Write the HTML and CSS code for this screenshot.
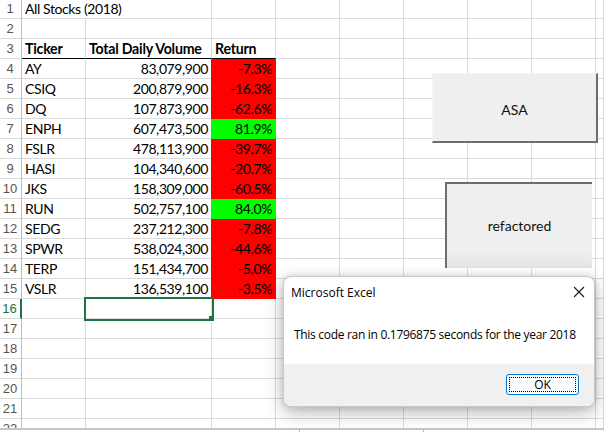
FILE: index.html
```html
<!DOCTYPE html>
<html>
<head>
<meta charset="utf-8">
<link rel="stylesheet" href="styles.css">
</head>
<body>
<div class="app">
  <div class="sheet">
    <div class="row r1"><div class="rh">1</div><div class="c wab">All Stocks (2018)</div><div class="c cc"></div><div class="c cd"></div><div class="c cd"></div><div class="c cd"></div><div class="c cd"></div><div class="c cd"></div><div class="c ci"></div></div>
    <div class="row"><div class="rh">2</div><div class="c ca"></div><div class="c cb"></div><div class="c cc"></div><div class="c cd"></div><div class="c cd"></div><div class="c cd"></div><div class="c cd"></div><div class="c cd"></div><div class="c ci"></div></div>
    <div class="row"><div class="rh">3</div><div class="c ca hd">Ticker</div><div class="c cb hd">Total Daily Volume</div><div class="c cc hd">Return</div><div class="c cd"></div><div class="c cd"></div><div class="c cd"></div><div class="c cd"></div><div class="c cd"></div><div class="c ci"></div></div>
    <div class="row"><div class="rh">4</div><div class="c ca">AY</div><div class="c cb num">83,079,900</div><div class="c cc num neg">-7.3%</div><div class="c cd"></div><div class="c cd"></div><div class="c cd"></div><div class="c cd"></div><div class="c cd"></div><div class="c ci"></div></div>
    <div class="row"><div class="rh">5</div><div class="c ca">CSIQ</div><div class="c cb num">200,879,900</div><div class="c cc num neg">-16.3%</div><div class="c cd"></div><div class="c cd"></div><div class="c cd"></div><div class="c cd"></div><div class="c cd"></div><div class="c ci"></div></div>
    <div class="row"><div class="rh">6</div><div class="c ca">DQ</div><div class="c cb num">107,873,900</div><div class="c cc num neg">-62.6%</div><div class="c cd"></div><div class="c cd"></div><div class="c cd"></div><div class="c cd"></div><div class="c cd"></div><div class="c ci"></div></div>
    <div class="row"><div class="rh">7</div><div class="c ca">ENPH</div><div class="c cb num">607,473,500</div><div class="c cc num pos">81.9%</div><div class="c cd"></div><div class="c cd"></div><div class="c cd"></div><div class="c cd"></div><div class="c cd"></div><div class="c ci"></div></div>
    <div class="row"><div class="rh">8</div><div class="c ca">FSLR</div><div class="c cb num">478,113,900</div><div class="c cc num neg">-39.7%</div><div class="c cd"></div><div class="c cd"></div><div class="c cd"></div><div class="c cd"></div><div class="c cd"></div><div class="c ci"></div></div>
    <div class="row"><div class="rh">9</div><div class="c ca">HASI</div><div class="c cb num">104,340,600</div><div class="c cc num neg">-20.7%</div><div class="c cd"></div><div class="c cd"></div><div class="c cd"></div><div class="c cd"></div><div class="c cd"></div><div class="c ci"></div></div>
    <div class="row"><div class="rh">10</div><div class="c ca">JKS</div><div class="c cb num">158,309,000</div><div class="c cc num neg">-60.5%</div><div class="c cd"></div><div class="c cd"></div><div class="c cd"></div><div class="c cd"></div><div class="c cd"></div><div class="c ci"></div></div>
    <div class="row"><div class="rh">11</div><div class="c ca">RUN</div><div class="c cb num">502,757,100</div><div class="c cc num pos">84.0%</div><div class="c cd"></div><div class="c cd"></div><div class="c cd"></div><div class="c cd"></div><div class="c cd"></div><div class="c ci"></div></div>
    <div class="row"><div class="rh">12</div><div class="c ca">SEDG</div><div class="c cb num">237,212,300</div><div class="c cc num neg">-7.8%</div><div class="c cd"></div><div class="c cd"></div><div class="c cd"></div><div class="c cd"></div><div class="c cd"></div><div class="c ci"></div></div>
    <div class="row"><div class="rh">13</div><div class="c ca">SPWR</div><div class="c cb num">538,024,300</div><div class="c cc num neg">-44.6%</div><div class="c cd"></div><div class="c cd"></div><div class="c cd"></div><div class="c cd"></div><div class="c cd"></div><div class="c ci"></div></div>
    <div class="row"><div class="rh">14</div><div class="c ca">TERP</div><div class="c cb num">151,434,700</div><div class="c cc num neg">-5.0%</div><div class="c cd"></div><div class="c cd"></div><div class="c cd"></div><div class="c cd"></div><div class="c cd"></div><div class="c ci"></div></div>
    <div class="row"><div class="rh">15</div><div class="c ca">VSLR</div><div class="c cb num">136,539,100</div><div class="c cc num neg">-3.5%</div><div class="c cd"></div><div class="c cd"></div><div class="c cd"></div><div class="c cd"></div><div class="c cd"></div><div class="c ci"></div></div>
    <div class="row"><div class="rh sel-rh">16</div><div class="c ca"></div><div class="c cb sel"><span class="handle"></span></div><div class="c cc"></div><div class="c cd"></div><div class="c cd"></div><div class="c cd"></div><div class="c cd"></div><div class="c cd"></div><div class="c ci"></div></div>
    <div class="row"><div class="rh">17</div><div class="c ca"></div><div class="c cb"></div><div class="c cc"></div><div class="c cd"></div><div class="c cd"></div><div class="c cd"></div><div class="c cd"></div><div class="c cd"></div><div class="c ci"></div></div>
    <div class="row"><div class="rh">18</div><div class="c ca"></div><div class="c cb"></div><div class="c cc"></div><div class="c cd"></div><div class="c cd"></div><div class="c cd"></div><div class="c cd"></div><div class="c cd"></div><div class="c ci"></div></div>
    <div class="row"><div class="rh">19</div><div class="c ca"></div><div class="c cb"></div><div class="c cc"></div><div class="c cd"></div><div class="c cd"></div><div class="c cd"></div><div class="c cd"></div><div class="c cd"></div><div class="c ci"></div></div>
    <div class="row"><div class="rh">20</div><div class="c ca"></div><div class="c cb"></div><div class="c cc"></div><div class="c cd"></div><div class="c cd"></div><div class="c cd"></div><div class="c cd"></div><div class="c cd"></div><div class="c ci"></div></div>
    <div class="row"><div class="rh">21</div><div class="c ca"></div><div class="c cb"></div><div class="c cc"></div><div class="c cd"></div><div class="c cd"></div><div class="c cd"></div><div class="c cd"></div><div class="c cd"></div><div class="c ci"></div></div>
    <div class="row"><div class="rh">22</div><div class="c ca"></div><div class="c cb"></div><div class="c cc"></div><div class="c cd"></div><div class="c cd"></div><div class="c cd"></div><div class="c cd"></div><div class="c cd"></div><div class="c ci"></div></div>
  </div>
  <div class="tabbar">
    <div class="tab-left"></div>
    <div class="tab-gap"></div>
    <div class="tab-right"></div>
  </div>

  <div class="shape-btn asa">ASA</div>
  <div class="shape-btn refac">refactored</div>

  <div class="dialog">
    <div class="dlg-title">
      <span>Microsoft Excel</span>
      <svg class="close" width="12" height="12" viewBox="0 0 12 12"><path d="M1 1 L11 11 M11 1 L1 11" stroke="#1a1a1a" stroke-width="1.1" fill="none"/></svg>
    </div>
    <div class="dlg-body">This code ran in 0.1796875 seconds for the year 2018</div>
    <div class="dlg-foot">
      <div class="ok"><span class="ok-inner">OK</span></div>
    </div>
  </div>
</div>
</body>
</html>
```

FILE: styles.css
```css
html, body {
  margin: 0;
  padding: 0;
  background: #ffffff;
}
.app {
  position: relative;
  width: 604px;
  height: 432px;
  overflow: hidden;
  font-family: "Lato", "Liberation Sans", sans-serif;
}
.sheet {
  height: 428px;
  overflow: hidden;
  display: flex;
  flex-direction: column;
  border-bottom: 2px solid #c6c6c6;
}
.row {
  display: flex;
  flex: none;
  height: 20px;
}
.row.r1 {
  height: 19px;
}
.rh, .c {
  box-sizing: border-box;
  height: 100%;
  flex: none;
  border-bottom: 1px solid #dadada;
  border-right: 1px solid #dadada;
  font-size: 14px;
  letter-spacing: -0.4px;
  line-height: 19px;
  white-space: nowrap;
  overflow: hidden;
  color: #000;
}
.rh {
  width: 22px;
  text-align: center;
  color: #555;
  font-family: "Liberation Sans", sans-serif;
  font-size: 13px;
  letter-spacing: 0;
  border-right: 1px solid #bcbcbc;
  padding-right: 1px;
}
.r1 .rh, .r1 .c { line-height: 18px; }
.c { padding: 0 3px; }
.wab { width: 190px; }
.ca { width: 64px; }
.cb { width: 126px; }
.cc { width: 64px; }
.cd { width: 64px; }
.ci { flex: 1; }
.hd {
  font-weight: 700;
  font-size: 14.2px;
  letter-spacing: -0.25px;
  border-bottom: 1px solid #000;
}
.num { text-align: right; }
.neg {
  background: #ff0000;
  border-right-color: #ff0000;
  border-bottom-color: #ff0000;
  box-shadow: -1px 0 0 #ff0000;
}
.pos {
  background: #00ff00;
  border-right-color: #00ff00;
  border-bottom-color: #00ff00;
  box-shadow: -1px 0 0 #00ff00;
}
.sel {
  position: relative;
  overflow: visible;
  outline: 2px solid #217346;
  outline-offset: 0px;
  z-index: 1;
}
.handle {
  position: absolute;
  right: -4px;
  bottom: -4px;
  width: 5px;
  height: 5px;
  background: #217346;
  border: 1px solid #fff;
  border-top: none;
  border-left: none;
}
.sel-rh {
  color: #217346;
  border-right: 2px solid #217346;
}

.tabbar {
  display: flex;
  height: 2px;
}
.tab-left {
  width: 299px;
  border-right: 1px solid #b0b0b0;
}
.tab-gap { width: 123px; }
.tab-right {
  flex: 1;
  border-left: 1px solid #b0b0b0;
}

.shape-btn {
  position: absolute;
  box-sizing: border-box;
  background: #efefef;
  display: flex;
  align-items: center;
  justify-content: center;
  font-family: "Lato", "Liberation Sans", sans-serif;
  font-size: 14px;
  color: #111;
}
.asa {
  left: 432px;
  top: 73px;
  width: 166px;
  height: 70px;
  border-right: 2px solid #6d6d6d;
  border-bottom: 2px solid #6d6d6d;
  border-top: 1px solid #f4f4f4;
  border-left: 1px solid #f4f4f4;
  padding-top: 3px;
}
.refac {
  left: 445px;
  top: 182px;
  width: 147px;
  height: 86px;
  border-left: 2px solid #6d6d6d;
  border-top: 2px solid #6d6d6d;
  background: linear-gradient(#efefef 0%, #efefef 80%, #e4e4e4 100%);
  padding-bottom: 2px;
}

.dialog {
  position: absolute;
  left: 283px;
  top: 276px;
  width: 312px;
  height: 131px;
  box-sizing: border-box;
  background: #fff;
  border: 1px solid #c9c9c9;
  border-radius: 8px;
  box-shadow: 0 6px 18px rgba(0, 0, 0, 0.28), 0 0 6px rgba(0, 0, 0, 0.12);
  display: flex;
  flex-direction: column;
  overflow: hidden;
  font-family: "Open Sans", "Noto Sans", sans-serif;
  font-size: 12px;
  color: #000;
}
.dlg-title {
  height: 30px;
  display: flex;
  align-items: center;
  justify-content: space-between;
  padding: 0 9px 0 7px;
  font-size: 12px;
}
.close { display: block; }
.dlg-body {
  flex: 1;
  padding: 19px 0 0 10px;
  font-size: 12px;
  letter-spacing: -0.3px;
}
.dlg-foot {
  height: 42px;
  background: #f0f0f0;
  display: flex;
  justify-content: flex-end;
  align-items: flex-start;
  padding: 10px 15px 0 0;
  box-sizing: border-box;
}
.ok {
  box-sizing: border-box;
  width: 73px;
  height: 21px;
  border: 1px solid #0078d7;
  border-radius: 3px;
  background: #fdfdfd;
  padding: 2px;
}
.ok-inner {
  display: flex;
  box-sizing: border-box;
  height: 100%;
  align-items: center;
  justify-content: center;
  border: 1px dotted #000;
  font-size: 12px;
  line-height: 1;
}
```
